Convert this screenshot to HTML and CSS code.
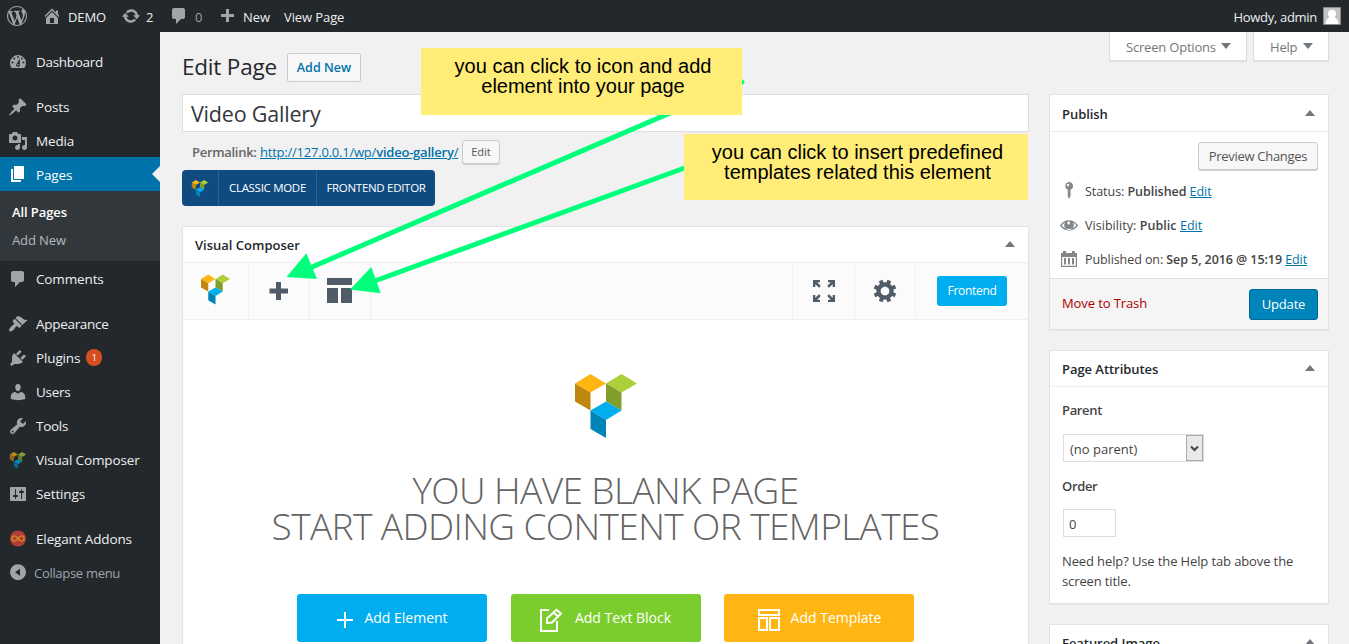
FILE: index.html
```html
<!DOCTYPE html>
<html lang="en">
<head>
<meta charset="utf-8">
<title>Edit Page</title>
<link rel="stylesheet" href="styles.css">
</head>
<body>
<svg class="defs" width="0" height="0">
  <symbol id="vc" viewBox="0 0 62 64">
    <path fill="#ffb612" d="M0 9.500 15.500 0 31 9.500 15.500 18.500z"/>
    <path fill="#bf870e" d="M0 9.500 15.500 18.500V36.500L0 27.500z"/>
    <path fill="#adcf3a" d="M31 9.500 46.500 0 62 9.500 46.500 18.500z"/>
    <path fill="#7f9e2b" d="M31 9.500 46.500 18.500V36.500L31 27.500z"/>
    <path fill="#00aeef" d="M15.500 36.500 31 27.500 46.500 36.500 31 46z"/>
    <path fill="#0084b8" d="M15.500 36.500 31 46V64L15.500 55z"/>
  </symbol>
  <symbol id="comment" viewBox="0 0 20 20"><path d="M5 2h9c1.100 0 2 .9 2 2v7c0 1.100-.9 2-2 2h-2l-5 5v-5H5c-1.100 0-2-.9-2-2V4c0-1.100.9-2 2-2z"/></symbol>
</svg>

<header class="adminbar">
  <svg class="ico ab-wp" viewBox="0 0 20 20"><path d="M20 10c0-5.510-4.490-10-10-10C4.480 0 0 4.490 0 10c0 5.520 4.480 10 10 10 5.510 0 10-4.480 10-10zM7.780 15.370L4.370 6.220c.55-.02 1.170-.08 1.170-.08.5-.06.44-1.130-.06-1.110 0 0-1.450.11-2.370.11-.18 0-.37 0-.58-.01C4.120 2.690 6.870 1.110 10 1.110c2.330 0 4.450.87 6.050 2.340-.68-.11-1.650.39-1.650 1.580 0 .74.45 1.360.9 2.100.35.61.55 1.360.55 2.460 0 1.490-1.400 5-1.400 5l-3.030-8.370c.54-.02.82-.17.82-.17.5-.05.44-1.250-.06-1.220 0 0-1.440.12-2.380.12-.87 0-2.330-.12-2.330-.12-.5-.03-.56 1.200-.06 1.220l.92.08 1.260 3.410zM17.410 10c.24-.64.74-1.870.43-4.250.7 1.290 1.050 2.710 1.050 4.250 0 3.290-1.730 6.240-4.400 7.780.97-2.590 1.940-5.200 2.920-7.780zM6.100 18.090C3.120 16.650 1.110 13.530 1.110 10c0-1.300.23-2.480.72-3.590C3.250 10.300 4.670 14.200 6.100 18.090zm4.030-6.630l2.580 6.980c-.86.29-1.760.45-2.710.45-.79 0-1.570-.11-2.290-.33.81-2.380 1.620-4.740 2.420-7.100z"/></svg>
  <svg class="ico ab-home" viewBox="0 0 20 20"><path fill-rule="evenodd" d="M16 8.500l1.530 1.530-1.060 1.060L10 4.600l-6.470 6.490-1.060-1.060L10 2.500l4 4v-2h2v4zm-6-2.460l6 5.990V18H4v-5.970zM12 17v-5H8v5h4z"/></svg>
  <span class="ab-demo">DEMO</span>
  <svg class="ico ab-update" viewBox="0 0 20 20"><path d="M10.200 3.280c3.530 0 6.430 2.610 6.920 6h2.080l-3.500 4-3.500-4h2.320c-.45-1.970-2.210-3.450-4.320-3.450-1.450 0-2.730.71-3.540 1.780L4.950 5.660C6.230 4.200 8.110 3.280 10.200 3.280zm-.4 13.440c-3.520 0-6.430-2.610-6.920-6H.8l3.500-4c1.170 1.330 2.330 2.670 3.500 4H5.480c.45 1.970 2.210 3.450 4.320 3.450 1.450 0 2.730-.71 3.540-1.780l1.710 1.950c-1.280 1.460-3.150 2.380-5.250 2.380z"/></svg>
  <span class="ab-count">2</span>
  <svg class="ico ab-comment"><use href="#comment"/></svg>
  <span class="ab-zero">0</span>
  <svg class="ico ab-plus" viewBox="0 0 20 20"><path d="M17 7v3h-5v5H9v-5H4V7h5V2h3v5h5z"/></svg>
  <span class="ab-new">New</span>
  <span class="ab-view">View Page</span>
  <span class="ab-user">Howdy, admin</span>
  <svg class="avatar" viewBox="0 0 18 18"><path fill="#c3c3c3" stroke="#888c90" d="M.5.5h17v17H.5z"/><path fill="#fff" d="M9 2.700c2.500 0 4 1.600 4 4 0 1.700-.7 3-1.500 3.700 2.500.8 3.800 3 4 6.600h-13c.2-3.600 1.500-5.800 4-6.600C5.700 9.700 5 8.400 5 6.700c0-2.400 1.500-4 4-4z"/></svg>
</header>

<div class="wrap">
<nav class="sidebar">
  <a class="item"><svg class="ico" viewBox="0 0 20 20"><path d="M3.760 16h12.480A8 8 0 1 0 3.760 16z"/><g fill="#23282d"><circle cx="10" cy="5" r="1"/><circle cx="6.200" cy="6.500" r="1"/><circle cx="13.800" cy="6.500" r="1"/><circle cx="4.500" cy="10.500" r="1"/><circle cx="15.500" cy="10.500" r="1"/><path d="M8.300 12.500 11.800 6.500v6.500a1.800 1.800 0 1 1-3.500-.5z"/></g><circle cx="10" cy="12.800" r=".8"/></svg><span class="tight">Dashboard</span></a>
  <a class="item gap"><svg class="ico" viewBox="0 0 20 20"><path d="M10.440 3.020l1.820-1.820 6.360 6.350-1.830 1.820c-1.050-.68-2.480-.57-3.410.36l-.75.75c-.92.93-1.040 2.350-.35 3.410l-1.830 1.820-2.410-2.410-2.800 2.790c-.42.42-3.380 2.710-3.800 2.290s1.860-3.390 2.280-3.810l2.790-2.790L4.100 9.360l1.830-1.820c1.050.69 2.480.57 3.400-.36l.75-.75c.93-.92 1.050-2.350.36-3.410z"/></svg><span>Posts</span></a>
  <a class="item"><svg class="ico" viewBox="0 0 20 20"><path d="M13 11V4c0-.55-.45-1-1-1h-1.670L9 1H5L3.670 3H2c-.55 0-1 .45-1 1v7c0 .55.45 1 1 1h10c.55 0 1-.45 1-1zM7 4.500c1.380 0 2.500 1.120 2.500 2.500S8.380 9.500 7 9.500 4.500 8.380 4.500 7 5.620 4.500 7 4.500zM14 6h5v10.500c0 1.380-1.120 2.500-2.500 2.500S14 17.880 14 16.500s1.120-2.500 2.500-2.500c.17 0 .34.020.5.050V9h-3V6zm-4 8.050V13h2v3.500c0 1.380-1.120 2.500-2.500 2.500S7 17.880 7 16.500 8.120 14 9.500 14c.17 0 .34.020.5.050z"/></svg><span>Media</span></a>
  <a class="item current"><svg class="ico" viewBox="0 0 20 20"><path d="M6 15V2h10v13H6zm-1 1h8v2H3V5h2v11z"/></svg><span>Pages</span></a>
  <div class="submenu"><a class="on">All Pages</a><a>Add New</a></div>
  <a class="item"><svg class="ico"><use href="#comment"/></svg><span>Comments</span></a>
  <a class="item gap"><svg class="ico" viewBox="0 0 20 20"><path d="M14.480 11.060L7.410 3.990l1.500-1.500c.5-.56 2.300-.47 3.510.32 1.210.8 1.430 1.280 2.910 2.100 1.180.64 2.450 1.260 4.450.85zm-.71.71L6.700 4.700 4.930 6.470c-.39.39-.39 1.020 0 1.410l1.060 1.060c.39.39.39 1.030 0 1.420-.6.6-1.430 1.110-2.210 1.690-.35.26-.7.53-1.010.84C1.430 14.230.4 16.080 1.400 17.070c.99 1 2.840-.03 4.180-1.360.31-.31.58-.66.85-1.020.57-.78 1.080-1.610 1.690-2.210.39-.39 1.020-.39 1.410 0l1.060 1.060c.39.39 1.020.39 1.410 0z"/></svg><span class="tight">Appearance</span></a>
  <a class="item"><svg class="ico" viewBox="0 0 20 20"><path d="M13.110 4.360L9.870 7.600 8 5.730l3.240-3.240c.35-.34 1.050-.2 1.560.32.52.51.66 1.210.31 1.550zm-8 1.770l.91-1.120 9.010 9.010-1.190.84c-.71.71-2.630 1.160-3.820 1.160H6.140L4.900 17.260c-.59.59-1.540.59-2.120 0-.59-.58-.59-1.530 0-2.120l1.240-1.240v-3.880c0-1.130.4-3.190 1.090-3.890zm7.260 3.970l3.240-3.240c.34-.35 1.040-.21 1.550.31.52.51.66 1.210.31 1.550l-3.240 3.250z"/></svg><span>Plugins</span><b class="count">1</b></a>
  <a class="item"><svg class="ico" viewBox="0 0 20 20"><path d="M10 9.250c-2.270 0-2.730-3.440-2.730-3.440C7 4.020 7.820 2 9.970 2c2.160 0 2.980 2.020 2.710 3.810 0 0-.41 3.440-2.680 3.440zm0 2.570L12.720 10c2.390 0 4.520 2.330 4.520 4.530v2.490s-3.650 1.130-7.240 1.130c-3.650 0-7.240-1.130-7.240-1.130v-2.490c0-2.250 1.940-4.480 4.470-4.480z"/></svg><span class="tight">Users</span></a>
  <a class="item"><svg class="ico" viewBox="0 0 20 20"><path d="M16.680 9.770c-1.340 1.340-3.300 1.670-4.950.99l-5.410 6.520c-.99.99-2.590.99-3.580 0s-.99-2.590 0-3.570l6.520-5.420c-.68-1.650-.35-3.610.99-4.950 1.280-1.280 3.120-1.620 4.720-1.060l-2.890 2.890 2.820 2.820 2.860-2.870c.53 1.580.18 3.390-1.080 4.650zM3.810 16.210c.4.390 1.040.39 1.430 0 .4-.4.4-1.040 0-1.430-.39-.4-1.030-.4-1.430 0-.39.39-.39 1.030 0 1.430z"/></svg><span class="tight">Tools</span></a>
  <a class="item"><svg class="ico vc-menu"><use href="#vc"/></svg><span>Visual Composer</span></a>
  <a class="item"><svg class="ico" viewBox="0 0 20 20"><path d="M18 16V4c0-.55-.45-1-1-1H3c-.55 0-1 .45-1 1v12c0 .55.45 1 1 1h14c.55 0 1-.45 1-1zM8 11h1c.55 0 1 .45 1 1s-.45 1-1 1H8v1.500c0 .28-.22.5-.5.5s-.5-.22-.5-.5V13H6c-.55 0-1-.45-1-1s.45-1 1-1h1V5.500c0-.28.22-.5.5-.5s.5.22.5.5V11zm5-2h-1c-.55 0-1-.45-1-1s.45-1 1-1h1V5.500c0-.28.22-.5.5-.5s.5.22.5.5V7h1c.55 0 1 .45 1 1s-.45 1-1 1h-1v5.500c0 .28-.22.5-.5.5s-.5-.22-.5-.5V9z"/></svg><span>Settings</span></a>
  <a class="item gap"><svg class="ico" viewBox="0 0 20 20"><circle cx="10" cy="9.500" r="8" fill="#b23c36"/><path fill="none" stroke="#cf8a25" stroke-width="1.300" d="M10 9.500C8.500 7.500 7.700 6.900 6.500 6.900a2.600 2.600 0 0 0 0 5.200c1.200 0 2-.6 3.500-2.600s2.300-2.600 3.500-2.600a2.600 2.600 0 0 1 0 5.200c-1.200 0-2-.6-3.500-2.600z"/></svg><span>Elegant Addons</span></a>
  <a class="item collapse"><svg class="ico" viewBox="0 0 20 20"><path fill-rule="evenodd" d="M10 1.200a8 8 0 1 0 0 16 8 8 0 0 0 0-16zM7 9.200l5-3.500v7z"/></svg><span>Collapse menu</span></a>
</nav>

<main class="content">
  <section class="primary">
    <div class="heading"><h1>Edit Page</h1><a class="btn add-new">Add New</a></div>
    <div class="title-input">Video Gallery</div>
    <div class="permalink"><strong>Permalink:</strong><a>http://127.0.0.1/wp/<b>video-gallery</b>/</a><span class="btn edit">Edit</span></div>
    <div class="switch"><span class="sw-logo"><svg><use href="#vc"/></svg></span><span class="sw-classic">CLASSIC MODE</span><span class="sw-front">FRONTEND EDITOR</span></div>
    <div class="box composer">
      <div class="box-head"><h2 class="w-vc">Visual Composer</h2><i class="up"></i></div>
      <div class="toolbar">
        <span class="tool t-logo"><svg width="29" height="31"><use href="#vc"/></svg></span>
        <span class="tool"><svg width="20" height="20" viewBox="0 0 20 20"><path d="M7 1h5v6.500H19v5h-7V19H7v-6.500H.5v-5H7z"/></svg></span>
        <span class="tool nudge"><svg width="25" height="25" viewBox="0 0 25 25"><path d="M0 0h25v7H0zM0 10h11v15H0zM14 10h11v15H14z"/></svg></span>
        <span class="spacer"></span>
        <span class="tool left"><svg width="22" height="22" viewBox="0 0 22 22"><path id="corner" d="M0 0h7v2.300H4.200L7.800 6 6 7.800 2.300 4.200V7H0z"/><use href="#corner" transform="matrix(-1 0 0 1 22 0)"/><use href="#corner" transform="matrix(1 0 0 -1 0 22)"/><use href="#corner" transform="rotate(180 11 11)"/></svg></span>
        <span class="tool"><svg width="24" height="24" viewBox="-12 -12 24 24"><path fill-rule="evenodd" transform="rotate(22.500) scale(1.330) translate(-9.500 -10.500)" d="M18 12h-2.180c-.17.7-.44 1.350-.81 1.930l1.540 1.540-2.100 2.100-1.540-1.540c-.58.36-1.230.63-1.910.79V19H8v-2.180c-.68-.16-1.330-.43-1.910-.79l-1.540 1.540-2.120-2.120 1.540-1.540c-.36-.58-.63-1.230-.79-1.910H1V9.030h2.170c.16-.7.44-1.350.8-1.940L2.430 5.550l2.100-2.100 1.540 1.540c.58-.37 1.240-.64 1.930-.81V2h3v2.180c.68.16 1.330.43 1.910.79l1.540-1.540 2.120 2.120-1.540 1.540c.36.59.64 1.240.8 1.940H18V12zm-8.500 1.800a3.300 3.300 0 1 0 0-6.600 3.300 3.300 0 0 0 0 6.600z"/></svg></span>
        <span class="front-cell"><a class="frontend">Frontend</a></span>
      </div>
      <div class="blank">
        <svg class="big-logo" width="62" height="64"><use href="#vc"/></svg>
        <div class="message"><div>YOU HAVE BLANK PAGE</div><div>START ADDING CONTENT OR TEMPLATES</div></div>
        <div class="actions">
          <a class="act blue"><svg width="16" height="16" viewBox="0 0 16 16"><path d="M8 0v16M0 8h16"/></svg><span>Add Element</span></a>
          <a class="act green"><svg width="25" height="25" viewBox="0 0 25 25"><path d="M10 2H2v21h16V13M8 15V10.500L17.500 1.800 22 5.500 13 14.500zM14.500 4.500 19 8.500"/></svg><span>Add Text Block</span></a>
          <a class="act orange"><svg width="22" height="22" viewBox="0 0 22 22"><path d="M1 1h20v5H1zM1 9h8v12H1zM12 9h9v12h-9z"/></svg><span>Add Template</span></a>
        </div>
      </div>
    </div>
  </section>

  <aside class="secondary">
    <div class="tabs"><a class="screen">Screen Options<i class="down"></i></a><a class="help">Help<i class="down"></i></a></div>
    <div class="box publish">
      <div class="box-head"><h2>Publish</h2><i class="up"></i></div>
      <div class="preview-row"><a class="btn preview">Preview Changes</a></div>
      <div class="misc"><svg viewBox="0 0 20 20"><path d="M10 1a4 4 0 0 1 1.500 7.700V15L10 18l-1.200-3V8.700A4 4 0 0 1 10 1z"/><circle cx="9" cy="4" r="1.200" fill="#fff"/></svg><span class="p-status">Status: <b>Published</b> <a>Edit</a></span></div>
      <div class="misc"><svg viewBox="0 0 20 20"><path fill-rule="evenodd" d="M18.300 9.500C15 4.900 8.500 3.800 3.900 7.200c-1.200.9-2.200 2-3 3.300 1.900 3 5.400 5 9.100 5s7.200-2 9.100-5zM2.700 10.500c.8-1.300 2-2.300 3.400-3a4.700 4.700 0 1 0 7.800 0c1.400.7 2.500 1.700 3.400 3-1.700 2.200-4.300 3.500-7.300 3.500s-5.600-1.300-7.300-3.500zM10 6.200a2 2 0 0 1 0 3.400 1.700 1.700 0 0 1 0-3.400z"/></svg><span class="p-vis">Visibility: <b>Public</b> <a>Edit</a></span></div>
      <div class="misc"><svg viewBox="0 0 20 20"><path fill-rule="evenodd" d="M2 4h2V2h3v2h6V2h3v2h2v14H2zM3.200 8v8.800h13.600V8zM5 9h2v6.500H5zM9 9h2v6.500H9zM13 9h2v6.500h-2z"/></svg><span class="p-date">Published on: <b>Sep 5, 2016 @ 15:19</b> <a>Edit</a></span></div>
      <div class="major"><a class="trash">Move to Trash</a><a class="update">Update</a></div>
    </div>
    <div class="box attributes">
      <div class="box-head"><h2>Page Attributes</h2><i class="up"></i></div>
      <b class="lab">Parent</b>
      <div class="select"><span>(no parent)</span><i><svg width="9" height="7" viewBox="0 0 9 7"><path d="M1 1.500 4.500 5 8 1.500" fill="none" stroke="#444" stroke-width="2"/></svg></i></div>
      <b class="lab lab-order">Order</b>
      <div class="order">0</div>
      <p class="hint">Need help? Use the Help tab above the<br>screen title.</p>
    </div>
    <div class="box featured"><div class="box-head"><h2>Featured Image</h2><i class="up"></i></div></div>
  </aside>
</main>
</div>

<svg class="arrows" width="1349" height="644"><path fill="none" stroke="#00ff7b" stroke-width="5" stroke-linecap="round" d="M742 82 312 267M690 166 376 280.500"/><path fill="#00ff7b" d="M286.500 277 306.300 253.300 317 279zM350 289.500 371.300 267 380.700 293.300z"/></svg>
<div class="note note-a">you can click to icon and add<br>element into your page</div>
<div class="note note-b">you can click to insert predefined<br>templates related this element</div>
</body>
</html>
```

FILE: styles.css
```css
* { box-sizing: border-box; }
html { overflow: hidden; }
body {
  margin: 0; width: 1349px; height: 644px; overflow: hidden; position: relative;
  background: #f1f1f1; color: #444;
  font: 13px/20px "Open Sans", "Noto Sans", sans-serif;
}
.defs { position: absolute; }
h1, h2, p { margin: 0; font-weight: 400; }
i { font-style: normal; }

.adminbar {
  height: 32px; display: flex; align-items: center; background: #23282d; color: #eee;
  padding: 2px 8px 0 7px; white-space: nowrap;
}
.adminbar span { line-height: 28px; }
.ico { width: 20px; height: 20px; fill: #a0a5aa; flex: none; display: block; }
.ab-wp { margin-top: -3px; }
.ab-home { margin: -2px 6px 0 15px; }
.ab-demo { width: 53px; letter-spacing: -.1px; }
.ab-update { margin-top: -3px; }
.ab-count { width: 27px; padding-left: 5px; }
.ab-comment { margin-top: -2px; margin-left: 1px; }
.ab-zero { width: 28px; padding-left: 6px; color: #9ca1a6; }
.ab-plus { margin-left: 0; }
.ab-new { width: 41px; margin-left: 6px; letter-spacing: -.1px; }
.ab-view { flex: 1; letter-spacing: -.1px; }
.ab-user { letter-spacing: -.3px; }
.avatar { width: 18px; height: 18px; margin: -3px 0 0 6px; }

.wrap { display: flex; height: 612px; }
.sidebar { width: 160px; flex: none; background: #23282d; padding-top: 13px; color: #eee; font-size: 13.500px; }
.item { display: flex; align-items: center; height: 34px; padding-left: 8px; gap: 8px; white-space: nowrap; position: relative; letter-spacing: -.14px; }
.tight { letter-spacing: -.3px; }
.gap { margin-top: 11px; }
.current { background: #0073aa; color: #fff; margin-top: -1px; }
.current span { padding-top: 2px; }
.current .ico { fill: #fff; }
.current::after {
  content: ""; position: absolute; right: 0; top: 9px;
  border: 8px solid transparent; border-left: 0; border-right-color: #f1f1f1;
}
.submenu { background: #32373c; height: 70px; margin-bottom: 1px; padding: 7px 12px; display: grid; font-size: 13px; color: #b4b9be; line-height: 28px; }
.submenu a { letter-spacing: -.1px; }
.submenu .on { color: #fff; font-weight: 600; letter-spacing: -.1px; }
.vc-menu { height: 17px; opacity: .7; }
.count { width: 16px; height: 17px; border-radius: 9px; background: #d54e21; font: 9px/17px "Open Sans", sans-serif; text-align: center; margin: -1px 0 0 -2px; letter-spacing: 0; color: #fff; }
.collapse { color: #a0a5aa; gap: 6px; font-size: 13px; letter-spacing: -.3px; }

.content { flex: 1; display: flex; padding-left: 22px; gap: 20px; }
.primary { width: 847px; flex: none; }
.heading { display: flex; align-items: center; height: 62px; padding-top: 8px; gap: 10px; }
h1 { font-size: 22.500px; line-height: 30px; color: #23282d; letter-spacing: -.2px; white-space: nowrap; width: 95px; }
.btn { background: #f7f7f7; border: 1px solid #ccc; border-radius: 3px; color: #555; text-align: center; white-space: nowrap; }
.add-new { width: 74px; height: 29px; line-height: 27px; color: #0073aa; font-weight: 600; font-size: 12.500px; border-radius: 2px; }
.title-input { height: 38px; background: #fff; border: 1px solid #ddd; color: #32373c; font-size: 21.500px; line-height: 38px; padding-left: 8px; letter-spacing: -.2px; }
.permalink { display: flex; align-items: center; height: 38px; padding: 2px 0 0 10px; white-space: nowrap; }
.permalink strong { font-weight: 600; color: #666; width: 68px; letter-spacing: -.3px; }
.permalink a { color: #0073aa; text-decoration: underline; width: 202px; letter-spacing: -.22px; }
.permalink b { font-weight: 600; }
.edit { width: 38px; height: 24px; line-height: 22px; font-size: 11px; box-shadow: 0 1px 0 #ccc; }
.switch { display: flex; width: 253px; height: 36px; border-radius: 4px; background: #0f4b7f; color: #fff; font-size: 11.500px; line-height: 36px; text-align: center; white-space: nowrap; letter-spacing: -.3px; }
.sw-logo { width: 36px; display: grid; place-items: center; }
.sw-logo svg { width: 18px; height: 17px; }
.sw-classic { width: 99px; border: solid #2b629a; border-width: 0 1px; }
.sw-front { flex: 1; }

.box { background: #fff; border: 1px solid #e3e3e3; box-shadow: 0 1px 1px rgba(0,0,0,.04); }
.box-head { height: 36px; border-bottom: 1px solid #eee; display: flex; justify-content: space-between; align-items: center; padding: 1px 13px 0 12px; }
h2 { font-size: 13px; font-weight: 600; color: #23282d; letter-spacing: -.05px; white-space: nowrap; }
.w-vc { letter-spacing: 0; }
.up { border: 5px solid transparent; border-top: 0; border-bottom: 6px solid #72777c; margin-top: -2px; }
.down { border: 5px solid transparent; border-bottom: 0; border-top: 6px solid #72777c; }
.composer { margin-top: 20px; height: 420px; overflow: hidden; }
.toolbar { height: 57px; background: #fbfbfb; border-bottom: 1px solid #f0f0f0; display: flex; fill: #4f5b66; }
.tool { width: 61px; display: grid; place-items: center; border-right: 1px solid #f0f0f0; padding-bottom: 1px; }
.nudge { padding: 0 2px 2px 0; }
.t-logo { width: 66px; padding-bottom: 3px; }
.spacer { flex: 1; }
.left { width: 63px; border-left: 1px solid #f0f0f0; }
.front-cell { width: 112px; display: grid; place-items: center; }
.frontend { width: 70px; height: 30px; border-radius: 3px; background: #00aeef; color: #fff; line-height: 30px; font-size: 12px; text-align: center; letter-spacing: -.3px; }
.blank { display: flex; flex-direction: column; align-items: center; padding-top: 54px; }
.message { margin-top: 34px; text-align: center; font-size: 37px; line-height: 36px; font-weight: 300; color: #646464; white-space: nowrap; letter-spacing: -.6px; }
.actions { display: flex; gap: 24px; margin-top: 50px; }
.act { width: 190px; height: 48px; border-radius: 3px; color: #fff; display: flex; align-items: center; justify-content: center; gap: 11px; font-size: 14px; white-space: nowrap; }
.act svg { fill: none; stroke: #fff; stroke-width: 2; margin-top: 4px; }
.blue { background: #00aeef; padding-left: 1px; }
.green { background: #7bcd2d; margin-right: -1px; padding-right: 2px; }
.orange { background: #ffb612; padding-left: 1px; }

.secondary { width: 280px; flex: none; }
.tabs { display: flex; justify-content: flex-end; gap: 6px; height: 62px; color: #72777c; }
.tabs a { height: 29px; background: #fff; border: 1px solid #ddd; border-top: 0; box-shadow: 0 1px 1px rgba(0,0,0,.06); display: flex; align-items: center; justify-content: space-between; padding: 2px 15px 0 16px; white-space: nowrap; letter-spacing: -.2px; }
.tabs .down { margin-top: -2px; }
.screen { width: 138px; }
.help { width: 76px; }
.publish .box-head { height: 37px; }
.preview-row { display: flex; justify-content: flex-end; padding: 10px 10px 0 0; height: 43px; }
.preview { width: 120px; height: 28px; line-height: 27px; box-shadow: 0 1px 0 #ccc; letter-spacing: -.3px; }
.misc { display: flex; align-items: center; height: 34px; padding-left: 9px; gap: 6px; white-space: nowrap; font-size: 12.500px; letter-spacing: -.05px; }
.misc svg { width: 20px; height: 20px; fill: #82878c; margin-top: -2px; }
.misc b { font-weight: 600; }
.misc a { color: #0073aa; text-decoration: underline; }
.p-vis { letter-spacing: .05px; }
.p-date { letter-spacing: -.08px; }
.major { margin-top: 1px; height: 51px; border-top: 1px solid #ddd; background: #f5f5f5; display: flex; justify-content: space-between; align-items: center; padding: 0 10px 0 12px; }
.trash { color: #a00; letter-spacing: -.1px; margin-top: -2px; }
.update { width: 69px; height: 31px; background: #0085ba; border: 1px solid #006799; border-radius: 3px; color: #fff; text-align: center; line-height: 29px; letter-spacing: -.2px; }
.attributes { margin-top: 20px; height: 254px; }
.lab { display: block; margin: 13px 12px 0; font-weight: 600; letter-spacing: -.35px; }
.lab-order { margin-top: 14px; }
.select { display: flex; justify-content: space-between; width: 141px; height: 28px; margin: 14px 0 0 13px; border: 1px solid #ddd; line-height: 28px; padding-left: 6px; }
.select i { width: 17px; border: 1px solid #aaa; background: #eaeaea; display: grid; place-items: center; }
.order { width: 53px; height: 28px; margin: 13px 0 0 13px; border: 1px solid #ddd; line-height: 28px; padding-left: 5px; }
.hint { margin: 14px 12px 0; white-space: nowrap; letter-spacing: -.12px; }
.featured { margin-top: 20px; height: 100px; }

.arrows { position: absolute; left: 0; top: 0; }
.note { position: absolute; background: #ffed78; color: #000; text-align: center; font: 20px/20px "Liberation Sans", Arial, sans-serif; white-space: nowrap; }
.note-a { left: 421px; top: 48px; width: 321px; height: 67px; padding: 8px 0 0 3px; }
.note-b { left: 684px; top: 134px; width: 344px; height: 66px; padding: 8px 0 0 3px; }
```
